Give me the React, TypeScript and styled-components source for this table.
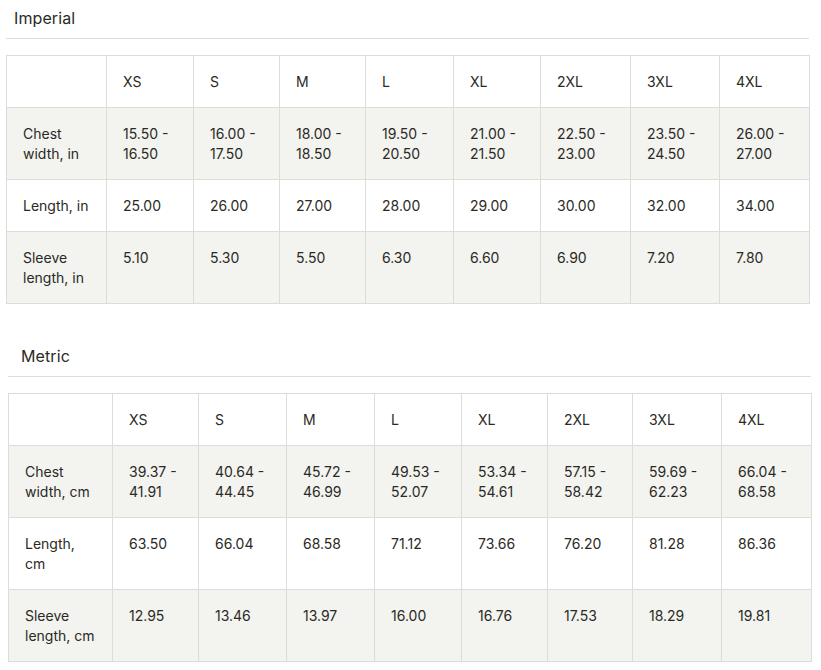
import { createGlobalStyle, styled } from "styled-components";

const GlobalStyle = createGlobalStyle`
  body {
    margin: 0;
    background: #ffffff;
    font-family: Inter, "Liberation Sans", Arial, sans-serif;
    color: #2a2a25;
  }
`;

const Page = styled.div`
  display: flex;
  flex-direction: column;
  gap: 34px;
  width: 821px;
`;

const Section = styled.section<{ $left: number; $width: number }>`
  margin-left: ${(p) => p.$left}px;
  width: ${(p) => p.$width}px;
`;

const Title = styled.h2<{ $indent: number }>`
  margin: 0;
  padding: 8px 0 10px ${(p) => p.$indent}px;
  font-size: 16px;
  line-height: 20px;
  font-weight: 400;
  letter-spacing: 0.1px;
  border-bottom: 1px solid #dddddb;
`;

const Table = styled.table`
  margin-top: 16px;
  width: 100%;
  border-collapse: collapse;
  table-layout: fixed;
  font-size: 14px;
  line-height: 20px;
`;

const Row = styled.tr<{ $shaded?: boolean }>`
  background: ${(p) => (p.$shaded ? "#f3f3ef" : "#ffffff")};
`;

const Cell = styled.td`
  border: 1px solid #dcdcd8;
  padding: 16px 16px 15px;
  vertical-align: top;
  text-align: left;
  white-space: pre-line;
  font-weight: 400;
`;

type Chart = {
  title: string;
  left: number;
  width: number;
  indent: number;
  cols: number[];
  rows: { label: string; values: string[] }[];
};

const sizes = ["XS", "S", "M", "L", "XL", "2XL", "3XL", "4XL"];

const charts: Chart[] = [
  {
    title: "Imperial",
    left: 6,
    width: 803,
    indent: 8,
    cols: [100, 87, 86, 86, 88, 87, 90, 89, 90],
    rows: [
      {
        label: "Chest\nwidth, in",
        values: [
          "15.50 -\n16.50",
          "16.00 -\n17.50",
          "18.00 -\n18.50",
          "19.50 -\n20.50",
          "21.00 -\n21.50",
          "22.50 -\n23.00",
          "23.50 -\n24.50",
          "26.00 -\n27.00",
        ],
      },
      {
        label: "Length, in",
        values: ["25.00", "26.00", "27.00", "28.00", "29.00", "30.00", "32.00", "34.00"],
      },
      {
        label: "Sleeve\nlength, in",
        values: ["5.10", "5.30", "5.50", "6.30", "6.60", "6.90", "7.20", "7.80"],
      },
    ],
  },
  {
    title: "Metric",
    left: 8,
    width: 803,
    indent: 13,
    cols: [104, 86, 88, 88, 87, 86, 85, 89, 90],
    rows: [
      {
        label: "Chest\nwidth, cm",
        values: [
          "39.37 -\n41.91",
          "40.64 -\n44.45",
          "45.72 -\n46.99",
          "49.53 -\n52.07",
          "53.34 -\n54.61",
          "57.15 -\n58.42",
          "59.69 -\n62.23",
          "66.04 -\n68.58",
        ],
      },
      {
        label: "Length,\ncm",
        values: ["63.50", "66.04", "68.58", "71.12", "73.66", "76.20", "81.28", "86.36"],
      },
      {
        label: "Sleeve\nlength, cm",
        values: ["12.95", "13.46", "13.97", "16.00", "16.76", "17.53", "18.29", "19.81"],
      },
    ],
  },
];

function SizeTable({ chart }: { chart: Chart }) {
  return (
    <Section $left={chart.left} $width={chart.width}>
      <Title $indent={chart.indent}>{chart.title}</Title>
      <Table>
        <colgroup>
          {chart.cols.map((w, i) => (
            <col key={i} style={{ width: w }} />
          ))}
        </colgroup>
        <tbody>
          <Row>
            <Cell />
            {sizes.map((s) => (
              <Cell key={s}>{s}</Cell>
            ))}
          </Row>
          {chart.rows.map((row, i) => (
            <Row key={row.label} $shaded={i % 2 === 0}>
              <Cell>{row.label}</Cell>
              {row.values.map((v, j) => (
                <Cell key={j}>{v}</Cell>
              ))}
            </Row>
          ))}
        </tbody>
      </Table>
    </Section>
  );
}

export default function App() {
  return (
    <Page>
      <GlobalStyle />
      {charts.map((c) => (
        <SizeTable key={c.title} chart={c} />
      ))}
    </Page>
  );
}
